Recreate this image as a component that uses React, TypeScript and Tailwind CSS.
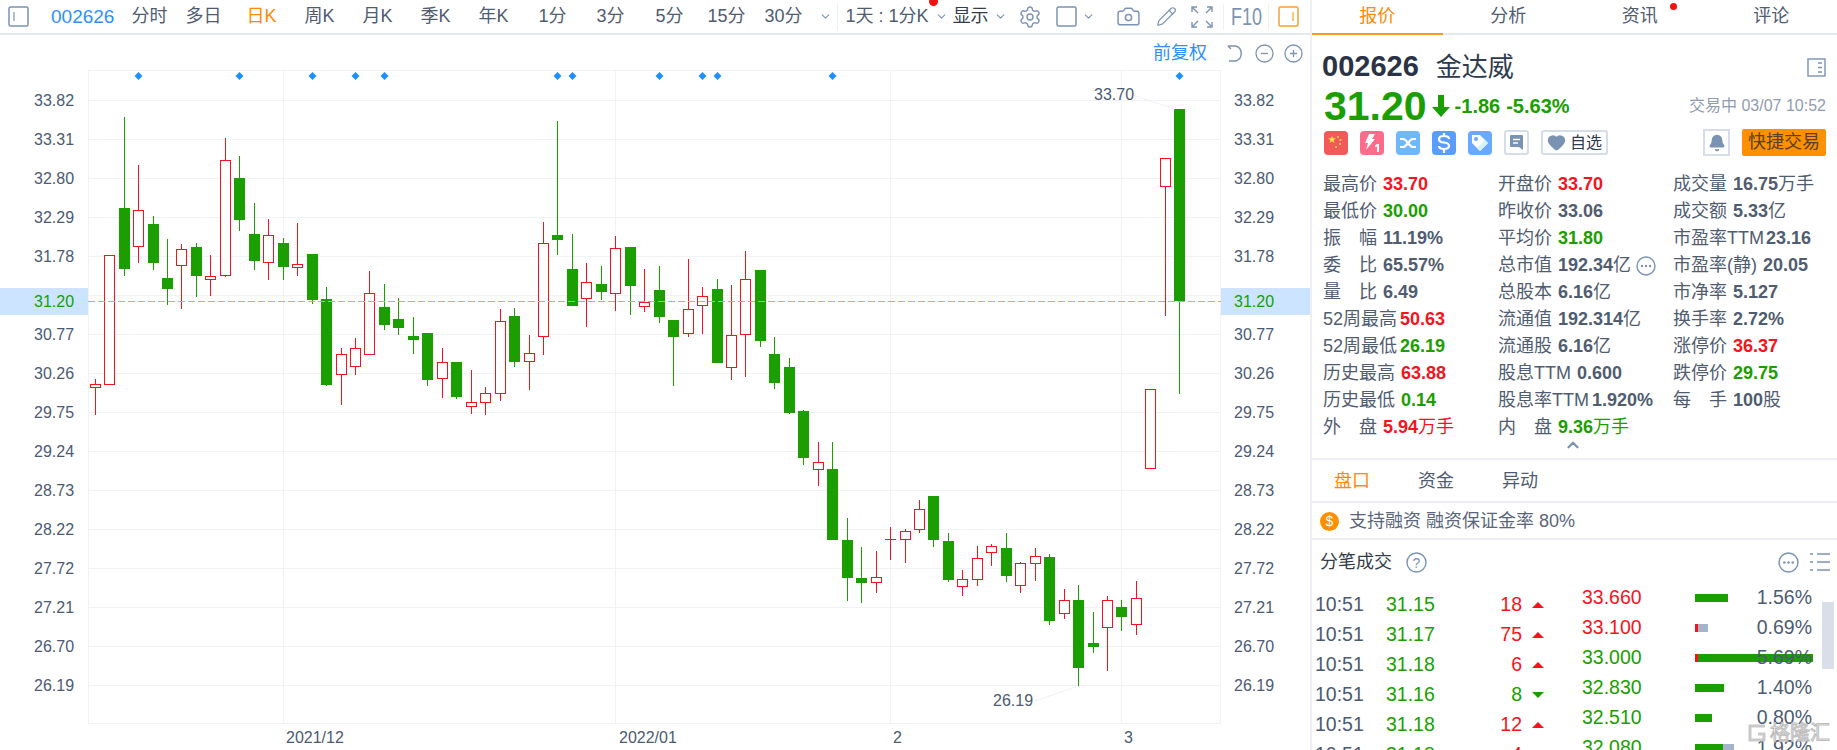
import { ChevronDown, ChevronUp, Settings, Camera, Pencil, Bell, Heart } from 'lucide-react';

const FONT = "'Liberation Sans','Noto Sans CJK SC',sans-serif";
const GREEN = '#1a9e00';
const RED = '#f5141e';

// x, high, low, body top, body bottom, up
const candles: [number, number, number, number, number, number][] = [
  [95.5, 379, 415, 384, 388, 1], [109.5, 255, 385, 255, 385, 1], [124.5, 117, 276, 208, 269, 0], [138.5, 165, 263, 210, 247, 1],
  [153.5, 216, 270, 224, 263, 0], [167.5, 239, 305, 278, 289, 0], [181.5, 244, 309, 249, 266, 1], [196.5, 243, 297, 247, 276, 0],
  [210.5, 255, 296, 276, 280, 1], [225.5, 138, 277, 160, 276, 1], [239.5, 156, 231, 178, 220, 0], [254.5, 203, 270, 234, 261, 0],
  [268.5, 219, 280, 235, 263, 1], [283.5, 238, 280, 243, 267, 0], [297.5, 223, 276, 264, 268, 1], [312.5, 254, 304, 254, 300, 0],
  [326.5, 287, 386, 299, 385, 0], [341.5, 348, 405, 354, 375, 1], [355.5, 338, 375, 348, 367, 1], [369.5, 271, 355, 293, 355, 1],
  [384.5, 284, 330, 307, 325, 0], [398.5, 298, 335, 319, 328, 0], [413.5, 317, 354, 336, 340, 0], [427.5, 333, 386, 333, 380, 0],
  [442.5, 348, 398, 362, 379, 1], [456.5, 362, 399, 362, 397, 0], [471.5, 370, 414, 402, 407, 1], [485.5, 387, 415, 393, 403, 1],
  [500.5, 309, 401, 321, 394, 1], [514.5, 308, 367, 316, 362, 0], [529.5, 335, 390, 353, 362, 1], [543.5, 222, 355, 243, 337, 1],
  [557.5, 121, 255, 235, 240, 0], [572.5, 234, 306, 269, 306, 0], [586.5, 263, 327, 282, 299, 1], [601.5, 266, 300, 284, 292, 0],
  [615.5, 236, 311, 248, 294, 1], [630.5, 247, 315, 247, 286, 0], [644.5, 269, 312, 302, 307, 1], [659.5, 266, 323, 290, 317, 0],
  [673.5, 320, 386, 320, 337, 0], [688.5, 259, 337, 309, 334, 1], [702.5, 287, 334, 296, 306, 1], [717.5, 279, 363, 289, 363, 0],
  [731.5, 285, 380, 335, 368, 1], [745.5, 251, 377, 279, 335, 1], [760.5, 270, 347, 270, 341, 0], [774.5, 337, 389, 354, 383, 0],
  [789.5, 358, 414, 367, 413, 0], [803.5, 410, 465, 411, 458, 0], [818.5, 442, 486, 462, 470, 1], [832.5, 442, 540, 469, 540, 0],
  [847.5, 518, 601, 540, 578, 0], [861.5, 547, 603, 578, 583, 0], [876.5, 551, 593, 577, 583, 1], [890.5, 527, 560, 539, 540, 1],
  [905.5, 529, 563, 531, 540, 1], [919.5, 500, 533, 509, 530, 1], [933.5, 496, 547, 496, 540, 0], [948.5, 533, 582, 541, 580, 0],
  [962.5, 570, 596, 579, 587, 1], [977.5, 546, 586, 558, 580, 1], [991.5, 544, 566, 546, 553, 1], [1006.5, 533, 582, 548, 576, 0],
  [1020.5, 562, 593, 563, 586, 1], [1035.5, 548, 581, 556, 564, 1], [1049.5, 554, 625, 557, 621, 0], [1064.5, 589, 619, 600, 614, 1],
  [1078.5, 585, 686, 600, 668, 0], [1093.5, 612, 653, 643, 647, 0], [1107.5, 596, 671, 600, 628, 1], [1121.5, 600, 631, 607, 617, 0],
  [1136.5, 581, 635, 598, 625, 1], [1150.5, 389, 469, 389, 469, 1], [1165.5, 158, 316, 158, 187, 1], [1179.5, 109, 394, 109, 301, 0],
];

const gridY = [100.5, 139.5, 178.5, 217.5, 256.5, 295.5, 334.5, 373.5, 412.5, 451.5, 490.5, 529.5, 568.5, 607.5, 646.5, 685.5];
const axis: [string, number][] = [
  ['33.82', 100], ['33.31', 139], ['32.80', 178], ['32.29', 217], ['31.78', 256], ['30.77', 334], ['30.26', 373], ['29.75', 412],
  ['29.24', 451], ['28.73', 490], ['28.22', 529], ['27.72', 568], ['27.21', 607], ['26.70', 646], ['26.19', 685],
];
const gridX = [88.5, 283.5, 615.5, 890.5, 1121.5, 1220.5];
const marks = [138.5, 239.5, 312.5, 355.5, 384.5, 557.5, 572.5, 659.5, 702.5, 717.5, 832.5, 1179.5];

function KChart() {
  return (
    <svg width={1310} height={680} viewBox="0 70 1310 680" className="block" style={{ fontFamily: FONT }}>
      <rect x={0} y={288} width={88} height={27} fill="#cce4ff" />
      <rect x={1221} y={288} width={89} height={27} fill="#cce4ff" />
      <line x1={88} y1={70.5} x2={1221} y2={70.5} stroke="#f0f2f6" />
      <line x1={88} y1={723.5} x2={1221} y2={723.5} stroke="#f0f2f6" />
      {gridY.map((y) => <line key={y} x1={88} y1={y} x2={1221} y2={y} stroke="#f0f2f6" />)}
      {gridX.map((x) => <line key={x} x1={x} y1={70} x2={x} y2={724} stroke="#f0f2f6" />)}
      {marks.map((x) => <path key={x} d={`M${x} 72l4 4l-4 4l-4 -4z`} fill="#1e8fff" />)}
      {candles.map(([x, hi, lo, top, bottom, up]) => {
        const color = up ? RED : GREEN;
        return (
          <g key={x}>
            <rect x={x - 0.5} y={hi} width={1} height={lo - hi} fill={color} />
            {!up || bottom - top <= 1 ? (
              <rect x={x - 5.5} y={top} width={11} height={bottom - top} fill={color} />
            ) : (
              <rect x={x - 5} y={top + 0.5} width={10} height={bottom - top - 1} fill="#fff" stroke={color} />
            )}
          </g>
        );
      })}
      <line x1={88} y1={301.5} x2={1221} y2={301.5} stroke="#e8a45a" strokeDasharray="7 3" />
      {axis.map(([t, y]) => (
        <g key={t} fontSize={16} fill="#4c5a72" dominantBaseline="central">
          <text x={34} y={y}>{t}</text>
          <text x={1234} y={y}>{t}</text>
        </g>
      ))}
      <text x={34} y={301} fontSize={16} fill={GREEN} dominantBaseline="central">31.20</text>
      <text x={1234} y={301} fontSize={16} fill={GREEN} dominantBaseline="central">31.20</text>
      <text x={1094} y={94} fontSize={16} fill="#4c5a72" dominantBaseline="central">33.70</text>
      <line x1={1135} y1={96} x2={1175} y2={109} stroke="#eef0f5" />
      <text x={993} y={700} fontSize={16} fill="#4c5a72" dominantBaseline="central">26.19</text>
      <line x1={1035} y1={701} x2={1078} y2={686} stroke="#eef0f5" />
      <g fontSize={16} fill="#4c5a72" dominantBaseline="central">
        <text x={286} y={737}>2021/12</text>
        <text x={619} y={737}>2022/01</text>
        <text x={893} y={737}>2</text>
        <text x={1124} y={737}>3</text>
      </g>
    </svg>
  );
}

function PanelIcon({ color, line }: { color: string; line: string }) {
  return (
    <svg width={21} height={21} viewBox="0 0 21 21" fill="none">
      <rect x={1} y={1} width={19} height={19} rx={1.5} stroke={color} strokeWidth={1.5} />
      <path d={line} stroke={color} strokeWidth={1.2} />
    </svg>
  );
}

function DotsCircle({ size = 20 }: { size?: number }) {
  return (
    <svg width={size} height={size} viewBox="0 0 20 20" fill="none">
      <circle cx={10} cy={10} r={9} stroke="#7b93b2" strokeWidth={1.4} />
      <circle cx={6} cy={10} r={1.2} fill="#7b93b2" />
      <circle cx={10} cy={10} r={1.2} fill="#7b93b2" />
      <circle cx={14} cy={10} r={1.2} fill="#7b93b2" />
    </svg>
  );
}

function Toolbar() {
  const periods: [string, string][] = [
    ['分时', 'ml-[17px]'], ['多日', 'ml-[18px]'], ['日K', 'ml-[25px] text-[#ff8a00]'], ['周K', 'ml-[28px]'], ['月K', 'ml-[28px]'],
    ['季K', 'ml-[28px]'], ['年K', 'ml-[28px]'], ['1分', 'ml-[30px]'], ['3分', 'ml-[30px]'], ['5分', 'ml-[31px]'], ['15分', 'ml-[24px]'], ['30分', 'ml-[19px]'],
  ];
  return (
    <div className="h-[35px] border-b-2 border-[#e6e8f0] flex items-center whitespace-nowrap text-[18px] leading-[33px] text-[#505c70]">
      <div className="ml-[8px] mr-[22px]"><PanelIcon color="#7b93b2" line="M6 6v9" /></div>
      <span className="text-[#2d8fff] text-[19px]">002626</span>
      {periods.map(([t, c]) => <span key={t} className={c}>{t}</span>)}
      <ChevronDown size={13} className="ml-[16px] text-[#7b93b2]" />
      <div className="w-px h-[26px] bg-[#eef0f5] ml-[5px]" />
      <span className="relative ml-[8px]">
        1天 : 1分K
        <span className="absolute -right-[9px] -top-[3px] w-[9px] h-[9px] rounded-full bg-[#f01010]" />
      </span>
      <ChevronDown size={13} className="ml-[6px] text-[#7b93b2]" />
      <span className="ml-[5px] text-[#333c4a]">显示</span>
      <ChevronDown size={13} className="ml-[5px] text-[#7b93b2]" />
      <Settings size={24} strokeWidth={1.4} className="ml-[11px] text-[#7b93b2]" />
      <div className="ml-[14px]"><PanelIcon color="#7b93b2" line="" /></div>
      <ChevronDown size={13} className="ml-[5px] text-[#7b93b2]" />
      <Camera size={25} strokeWidth={1.4} className="ml-[21px] text-[#7b93b2]" />
      <Pencil size={21} strokeWidth={1.4} className="ml-[15px] text-[#7b93b2]" />
      <svg width={22} height={22} viewBox="0 0 22 22" fill="none" stroke="#7b93b2" strokeWidth={1.4} className="ml-[14px]">
        <path d="M1 6V1h5M16 1h5v5M21 16v5h-5M6 21H1v-5M2 2l5 5M20 2l-5 5M20 20l-5-5M2 20l5-5" />
      </svg>
      <div className="w-px h-[26px] bg-[#eef0f5] ml-[10px]" />
      <span className="ml-[7px] w-[32px] inline-block origin-left scale-x-[0.75] text-[#7b93b2] text-[24px] font-light">F10</span>
      <div className="w-px h-[26px] bg-[#eef0f5] ml-[5px]" />
      <div className="ml-[9px]"><PanelIcon color="#f5a033" line="M15 6v9" /></div>
    </div>
  );
}

function ChartTools() {
  return (
    <div className="h-[35px] flex items-center justify-end pr-[7px] pt-[1px]">
      <span className="text-[18px] text-[#2d8fff] leading-[24px]">前复权</span>
      <svg width={19} height={19} viewBox="0 0 19 19" fill="none" stroke="#7b93b2" strokeWidth={1.4} className="ml-[20px]">
        <path d="M1 2h8a8 8 0 0 1 0 15H2M1 2l3 3" />
      </svg>
      <svg width={19} height={19} viewBox="0 0 19 19" fill="none" stroke="#7b93b2" strokeWidth={1.3} className="ml-[9px]">
        <circle cx={9.5} cy={9.5} r={8.5} /><path d="M6 9.5h7" />
      </svg>
      <svg width={19} height={19} viewBox="0 0 19 19" fill="none" stroke="#7b93b2" strokeWidth={1.3} className="ml-[10px]">
        <circle cx={9.5} cy={9.5} r={8.5} /><path d="M6 9.5h7M9.5 6v7" />
      </svg>
    </div>
  );
}

function Badge({ bg, children }: { bg: string; children: React.ReactNode }) {
  return <div className={`w-[24px] h-[24px] rounded-[4px] flex items-center justify-center ${bg}`}>{children}</div>;
}

function Quote() {
  return (
    <div className="h-[124px] pl-[12px] pr-[11px] pt-[20px] relative">
      <div className="flex items-center h-[24px]">
        <span className="font-bold text-[29px] -ml-[2px] text-[#2a3346]">002626</span>
        <span className="ml-[17px] text-[26px] text-[#2e3a4f]">金达威</span>
        <svg width={19} height={19} viewBox="0 0 19 19" fill="none" stroke="#7b93b2" strokeWidth={1.4} className="ml-auto">
          <rect x={1} y={1} width={17} height={17} /><path d="M11 5h4M11 9.5h4M11 14h4" />
        </svg>
      </div>
      <div className="flex items-center h-[40px] mt-[7px]">
        <span className="font-bold text-[41px] text-[#1a9e00] leading-[40px]">31.20</span>
        <svg width={18} height={22} viewBox="0 0 18 22" fill="#1a9e00" className="ml-[5px]">
          <path d="M6 0h6v12h6L9 22L0 12h6z" />
        </svg>
        <span className="ml-[5px] font-bold text-[20px] text-[#1a9e00]">-1.86</span>
        <span className="ml-[6px] font-bold text-[20px] text-[#1a9e00]">-5.63%</span>
        <span className="ml-auto text-[16px] text-[#8f9bb0]">交易中 03/07 10:52</span>
      </div>
      <div className="flex items-center h-[27px] mt-[3px]">
        <div className="flex gap-[12px] items-center">
          <Badge bg="bg-[#f25a5a]">
            <svg width={18} height={18} viewBox="0 0 18 18" fill="#ffe14d">
              <path d="M5 1.500l1.100 2.700 2.900.1-2.300 1.800.8 2.800L5 7.300 2.500 8.900l.8-2.800L1 4.300l2.900-.1z" />
              <circle cx={11} cy={3} r={1} /><circle cx={13.500} cy={6} r={1} /><circle cx={13} cy={10} r={1} /><circle cx={9} cy={13} r={1} />
            </svg>
          </Badge>
          <Badge bg="bg-[#ff6b8a]">
            <svg width={22} height={22} viewBox="0 0 22 22" fill="#fff">
              <path d="M8 2h6l-3 5h3L5 18l2-7H4z" /><path d="M16 12h2v8h-2v-5.500l-2 .7v-1.700z" />
            </svg>
          </Badge>
          <Badge bg="bg-[#6fb8ff]">
            <svg width={18} height={18} viewBox="0 0 18 18" fill="none" stroke="#fff" strokeWidth={2.2}>
              <path d="M1 5h3c4 0 6 8 10 8h3M1 13h3c4 0 6-8 10-8h3" />
            </svg>
          </Badge>
          <Badge bg="bg-[#5b9dff]">
            <svg width={16} height={20} viewBox="0 0 16 20" fill="none" stroke="#fff" strokeWidth={2.2}>
              <path d="M13 6c0-2-2-3-5-3s-5 1-5 3.200c0 2 2 3 5 3.300s5 1.300 5 3.300c0 2.200-2 3.200-5 3.200s-5-1-5-3M8 0v3M8 16v4" />
            </svg>
          </Badge>
          <Badge bg="bg-[#6ba8ff]">
            <svg width={20} height={20} viewBox="0 0 20 20">
              <path d="M2 2h8l8 8l-8 8l-8-8z" fill="#fff" /><path d="M10 18l8-8l-3-3l-8 8z" fill="#d4f2f8" /><circle cx={6} cy={6} r={2} fill="#6ba8ff" />
            </svg>
          </Badge>
          <div className="w-[25px] h-[25px] border-2 border-[#d5dde8] rounded-[3px] flex items-center justify-center">
            <svg width={15} height={17} viewBox="0 0 15 17">
              <path d="M1 2a1 1 0 0 1 1-1h11a1 1 0 0 1 1 1v14l-4-3H2a1 1 0 0 1-1-1z" fill="#7b93b2" /><path d="M4 5.500h7M4 9h5" stroke="#fff" strokeWidth={1.6} />
            </svg>
          </div>
        </div>
        <div className="ml-[12px] w-[67px] h-[25px] border-2 border-[#d5dde8] rounded-[3px] flex items-center justify-center gap-[4px] text-[16px] text-[#2e3a4f]">
          <Heart size={19} fill="#7b93b2" stroke="#7b93b2" />自选
        </div>
        <div className="ml-auto w-[27px] h-[27px] border-2 border-[#d5dde8] flex items-center justify-center">
          <Bell size={18} fill="#7b93b2" stroke="#7b93b2" />
        </div>
        <div className="ml-[12px] w-[84px] h-[27px] bg-[#ff9000] rounded-[2px] text-center text-[18px] leading-[27px] text-[#5a4020]">快捷交易</div>
      </div>
    </div>
  );
}

type Cell = { l: string; v: string; u?: string; c?: string; sp?: boolean; more?: boolean; gap?: string };

const statCols: Cell[][] = [
  [
    { l: '最高价', v: '33.70', c: 'text-[#f5141e]' }, { l: '最低价', v: '30.00', c: 'text-[#1a9e00]' }, { l: '振幅', v: '11.19%', sp: true },
    { l: '委比', v: '65.57%', sp: true }, { l: '量比', v: '6.49', sp: true }, { l: '52周最高', v: '50.63', c: 'text-[#f5141e]', gap: 'ml-[3px]' },
    { l: '52周最低', v: '26.19', c: 'text-[#1a9e00]', gap: 'ml-[3px]' }, { l: '历史最高', v: '63.88', c: 'text-[#f5141e]' }, { l: '历史最低', v: '0.14', c: 'text-[#1a9e00]' },
    { l: '外盘', v: '5.94', u: '万手', c: 'text-[#f5141e]', sp: true },
  ],
  [
    { l: '开盘价', v: '33.70', c: 'text-[#f5141e]' }, { l: '昨收价', v: '33.06' }, { l: '平均价', v: '31.80', c: 'text-[#1a9e00]' },
    { l: '总市值', v: '192.34', u: '亿', more: true }, { l: '总股本', v: '6.16', u: '亿' }, { l: '流通值', v: '192.314', u: '亿' },
    { l: '流通股', v: '6.16', u: '亿' }, { l: '股息TTM', v: '0.600' }, { l: '股息率TTM', v: '1.920%', gap: 'ml-[3px]' },
    { l: '内盘', v: '9.36', u: '万手', c: 'text-[#1a9e00]', sp: true },
  ],
  [
    { l: '成交量', v: '16.75', u: '万手' }, { l: '成交额', v: '5.33', u: '亿' }, { l: '市盈率TTM', v: '23.16', gap: 'ml-[2px]' }, { l: '市盈率(静)', v: '20.05' },
    { l: '市净率', v: '5.127' }, { l: '换手率', v: '2.72%' }, { l: '涨停价', v: '36.37', c: 'text-[#f5141e]' }, { l: '跌停价', v: '29.75', c: 'text-[#1a9e00]' },
    { l: '每手', v: '100', u: '股', sp: true },
  ],
];

function Stats() {
  return (
    <div className="h-[301px] pl-[11px] pt-[12px] relative border-b-2 border-[#eef0f5]">
      <div className="grid grid-cols-[175px_175px_1fr]">
        {statCols.map((col, i) => (
          <div key={i}>
            {col.map((s) => (
              <div key={s.l} className="h-[27px] flex items-center text-[18px] text-[#505c70]">
                {s.sp ? (
                  <span className="w-[54px] flex justify-between"><span>{s.l[0]}</span><span>{s.l[1]}</span></span>
                ) : (
                  <span className="whitespace-nowrap">{s.l}</span>
                )}
                <span className={`${s.gap ?? 'ml-[6px]'} whitespace-nowrap font-bold ${s.c ?? 'text-[#505c70]'}`}>
                  {s.v}{s.u && <span className="font-normal">{s.u}</span>}
                </span>
                {s.more && <span className="ml-[5px]"><DotsCircle /></span>}
              </div>
            ))}
          </div>
        ))}
      </div>
      <ChevronUp size={18} strokeWidth={3} className="absolute left-[252px] top-[277px] text-[#7b93b2]" />
    </div>
  );
}

const buys: [string, string, string, number][] = [
  ['10:51', '31.15', '18', 1], ['10:51', '31.17', '75', 1], ['10:51', '31.18', '6', 1],
  ['10:51', '31.16', '8', 0], ['10:51', '31.18', '12', 1], ['10:51', '31.18', '4', 1],
];
const prices: [string, string, number, number, number][] = [
  ['33.660', '1.56%', 0, 33, 0], ['33.100', '0.69%', 3, 0, 10], ['33.000', '5.69%', 3, 117, 0],
  ['32.830', '1.40%', 0, 29, 0], ['32.510', '0.80%', 0, 17, 0], ['32.080', '1.92%', 0, 28, 11],
];

function Trades() {
  return (
    <div className="flex text-[19.5px] relative">
      <div className="w-[270px] pl-[3px] pt-[29px]">
        {buys.map(([t, p, v, up], i) => (
          <div key={i} className="h-[30px] flex items-center">
            <span className="w-[71px] text-[#4c5a72]">{t}</span>
            <span className="w-[60px] text-[#1a9e00]">{p}</span>
            <span className={`w-[76px] text-right ${up ? 'text-[#f5141e]' : 'text-[#1a9e00]'}`}>{v}</span>
            <span className={`ml-[10px] w-0 h-0 border-x-[6px] border-x-transparent ${up ? 'border-b-[6px] border-b-[#f5141e]' : 'border-t-[6px] border-t-[#1a9e00]'}`} />
          </div>
        ))}
      </div>
      <div className="pt-[22px]">
        {prices.map(([p, pct, r, g, b]) => (
          <div key={p} className="h-[30px] flex items-center relative">
            <span className={`w-[113px] ${p === '33.660' || p === '33.100' ? 'text-[#f5141e]' : 'text-[#1a9e00]'}`}>{p}</span>
            <span className="flex h-[8px] w-[118px]">
              <span className="bg-[#f5141e] h-full" style={{ width: r }} />
              <span className="bg-[#1a9e00] h-full" style={{ width: g }} />
              <span className="bg-[#a3b4cb] h-full" style={{ width: b }} />
            </span>
            <span className="absolute right-[1px] text-[#4c5a72]">{pct}</span>
          </div>
        ))}
      </div>
      <div className="absolute left-[510px] top-[41px] w-[12px] h-[67px] bg-[#d8dfe8]" />
    </div>
  );
}

function Watermark() {
  return (
    <div className="absolute right-[7px] bottom-[7px] flex items-center gap-[3px] text-[20px] leading-[20px] text-white/60 [-webkit-text-stroke:1px_#bbbbbb]">
      <svg width={20} height={20} viewBox="0 0 20 20" fill="none" stroke="#c9c9c9" strokeWidth={3}>
        <path d="M18 3H3v14h14v-6h-6" />
      </svg>
      格隆汇
    </div>
  );
}

export default function App() {
  return (
    <div className="w-[1837px] h-[750px] overflow-hidden bg-white flex" style={{ fontFamily: FONT }}>
      <div className="w-[1310px] shrink-0">
        <Toolbar />
        <ChartTools />
        <KChart />
      </div>
      <div className="w-[527px] shrink-0 border-l-2 border-[#eef0f5] relative overflow-hidden">
        <div className="h-[35px] flex border-b-2 border-[#e6e8f0] text-[18px] text-[#505c70] leading-[33px] text-center">
          <div className="w-[131px] h-[35px] border-b-2 border-[#f39c23] text-[#ff8a00]">报价</div>
          <div className="w-[132px]">分析</div>
          <div className="w-[132px] relative">
            资讯
            <span className="absolute left-[96px] top-[3px] w-[7px] h-[7px] rounded-full bg-[#f01010]" />
          </div>
          <div className="w-[132px]">评论</div>
        </div>
        <Quote />
        <Stats />
        <div className="h-[43px] pt-[1px] border-b-2 border-[#eceef3] flex items-center pl-[22px] gap-[48px] text-[18px] text-[#505c70]">
          <span className="text-[#ff8a00]">盘口</span>
          <span>资金</span>
          <span>异动</span>
        </div>
        <div className="h-[37px] pt-[1px] border-b-2 border-[#eceef3] flex items-center pl-[8px] gap-[10px] text-[18px] text-[#5a667a]">
          <span className="w-[19px] h-[19px] rounded-full bg-[#ff8f00] text-white text-[14px] leading-[19px] text-center">$</span>
          <span>支持融资 融资保证金率 80%</span>
        </div>
        <div className="h-[44px] flex items-center pl-[8px] pr-[7px] text-[18px] text-[#333c4a]">
          <span>分笔成交</span>
          <svg width={21} height={21} viewBox="0 0 21 21" fill="none" className="ml-[14px]">
            <circle cx={10.500} cy={10.500} r={9.500} stroke="#7b93b2" strokeWidth={1.400} />
            <text x={10.500} y={15.500} fontSize={14} textAnchor="middle" fill="#7b93b2">?</text>
          </svg>
          <span className="ml-auto"><DotsCircle size={21} /></span>
          <svg width={20} height={20} viewBox="0 0 20 20" fill="none" stroke="#7b93b2" strokeWidth={1.300} className="ml-[11px]">
            <path d="M0 2h3M7 2h13M0 10h3M7 10h13M0 18h3M7 18h13" />
          </svg>
        </div>
        <div className="-mt-[23px]">
          <Trades />
        </div>
        <Watermark />
      </div>
    </div>
  );
}
